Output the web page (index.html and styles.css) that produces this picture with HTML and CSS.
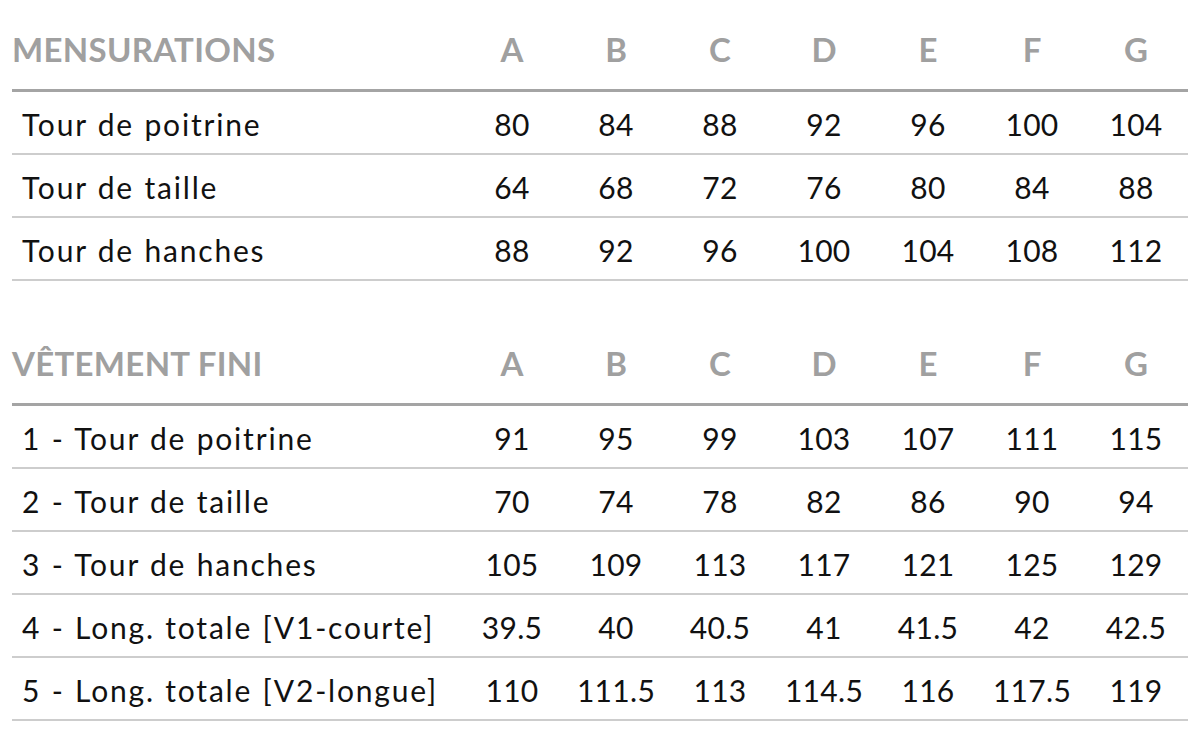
FILE: index.html
```html
<!DOCTYPE html>
<html lang="fr">
<head>
<meta charset="utf-8">
<title>Tableau des tailles</title>
<link rel="stylesheet" href="styles.css">
</head>
<body>
<table class="sizes">
  <colgroup><col class="label-col"><col><col><col><col><col><col><col></colgroup>
  <thead>
    <tr><th class="label">MENSURATIONS</th><th>A</th><th>B</th><th>C</th><th>D</th><th>E</th><th>F</th><th>G</th></tr>
  </thead>
  <tbody>
    <tr><td class="label">Tour de poitrine</td><td>80</td><td>84</td><td>88</td><td>92</td><td>96</td><td>100</td><td>104</td></tr>
    <tr><td class="label">Tour de taille</td><td>64</td><td>68</td><td>72</td><td>76</td><td>80</td><td>84</td><td>88</td></tr>
    <tr><td class="label">Tour de hanches</td><td>88</td><td>92</td><td>96</td><td>100</td><td>104</td><td>108</td><td>112</td></tr>
  </tbody>
</table>
<table class="sizes second">
  <colgroup><col class="label-col"><col><col><col><col><col><col><col></colgroup>
  <thead>
    <tr><th class="label">VÊTEMENT FINI</th><th>A</th><th>B</th><th>C</th><th>D</th><th>E</th><th>F</th><th>G</th></tr>
  </thead>
  <tbody>
    <tr><td class="label">1 - Tour de poitrine</td><td>91</td><td>95</td><td>99</td><td>103</td><td>107</td><td>111</td><td>115</td></tr>
    <tr><td class="label">2 - Tour de taille</td><td>70</td><td>74</td><td>78</td><td>82</td><td>86</td><td>90</td><td>94</td></tr>
    <tr><td class="label">3 - Tour de hanches</td><td>105</td><td>109</td><td>113</td><td>117</td><td>121</td><td>125</td><td>129</td></tr>
    <tr><td class="label">4 - Long. totale [V1-courte]</td><td>39.5</td><td>40</td><td>40.5</td><td>41</td><td>41.5</td><td>42</td><td>42.5</td></tr>
    <tr><td class="label">5 - Long. totale [V2-longue]</td><td>110</td><td>111.5</td><td>113</td><td>114.5</td><td>116</td><td>117.5</td><td>119</td></tr>
  </tbody>
</table>
</body>
</html>
```
FILE: styles.css
```css
html, body {
  margin: 0;
  padding: 0;
  background: #ffffff;
}

body {
  font-family: Lato, "Noto Sans", sans-serif;
  color: #111111;
}

.sizes {
  border-collapse: collapse;
  table-layout: fixed;
  width: 1176px;
  margin-left: 12px;
}

.sizes.second {
  margin-top: 33px;
}

.label-col {
  width: 448px;
}

.sizes th {
  font-size: 33px;
  font-weight: 700;
  color: #a0a0a0;
  text-align: center;
  line-height: 40px;
  padding: 29px 0 20px 0;
  border-bottom: 3px solid #a4a4a4;
}

.sizes th.label {
  text-align: left;
  padding-left: 0;
  letter-spacing: 0.3px;
}

.sizes td {
  font-size: 30px;
  font-weight: 400;
  text-align: center;
  line-height: 58px;
  padding: 3px 0 0 0;
  border-bottom: 2px solid #cdcdcd;
  white-space: nowrap;
  letter-spacing: 0.3px;
}

.sizes td.label {
  text-align: left;
  padding-left: 10px;
  letter-spacing: 1.8px;
  word-spacing: 1px;
}
```
